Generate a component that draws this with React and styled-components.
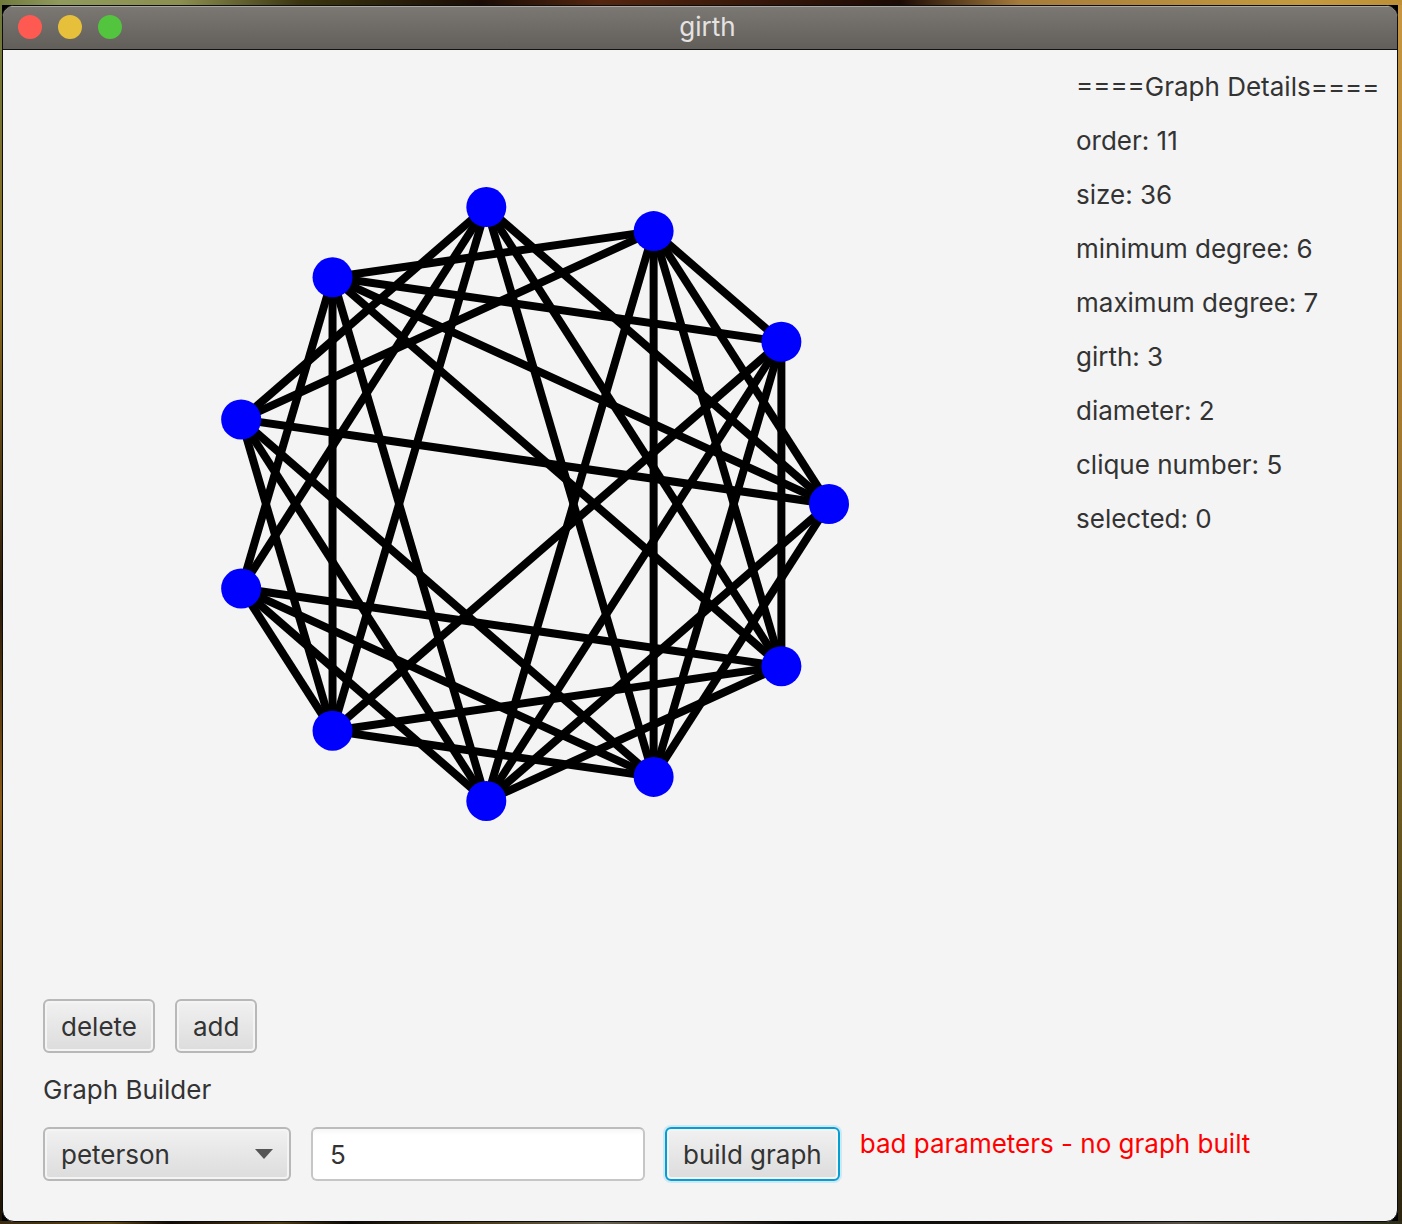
import styled, { createGlobalStyle } from "styled-components";

const GlobalStyle = createGlobalStyle`
  html, body {
    margin: 0;
    padding: 0;
    width: 1402px;
    height: 1224px;
    overflow: hidden;
  }
  * {
    box-sizing: border-box;
  }
`;

const Desktop = styled.div`
  width: 1402px;
  height: 1224px;
  padding: 5px 4px 2px 2px;
  font-family: Inter, "Liberation Sans", sans-serif;
  font-size: 26px;
  color: #333;
  background:
    linear-gradient(90deg, #6f7a3c 0, #8f9a5c 60px, #8c8f50 180px, #3a3510 300px, #1a0c04 480px, #54260f 600px, #1c0a04 900px, #a67c3c 1020px, #c49a40 1300px, #b7872e 1500px, #1a0c06 1600px, #c8963f 1700px, #c79a4e 2100px, #180c10 2240px, #d0a050 2500px, #c89848 2700px) top left / 1402px 5px no-repeat,
    linear-gradient(90deg, #3a2a10 0, #5a4518 110px, #120a04 170px, #4c3a16 280px, #0c0804 350px, #4a3c1c 480px, #6a6252 600px, #3a3024 720px, #050505 800px, #1a140c 1000px, #5a5248 1180px, #2c2c18 1402px) bottom left / 1402px 3px no-repeat,
    linear-gradient(180deg, #6f7a3c 0, #8a6a20 300px, #2a1a08 600px, #8a5a18 800px, #1c1206 1224px) left top / 2px 1224px no-repeat,
    linear-gradient(180deg, #c8963f 0, #a87c30 400px, #6c5a20 800px, #2c2410 1224px) right top / 4px 1224px no-repeat,
    #000;
`;

const Win = styled.div`
  height: 1217px;
  width: 1396px;
  border: 1px solid #0c0c0c;
  border-radius: 12px;
  overflow: hidden;
  display: flex;
  flex-direction: column;
  background: #f4f4f4;
`;

const TitleBar = styled.div`
  height: 44px;
  flex: none;
  display: grid;
  grid-template-columns: 1fr auto 1fr;
  align-items: center;
  padding: 0 0 2px 15px;
  border-top: 1px solid #a8a6a4;
  border-bottom: 1px solid #111;
  background: linear-gradient(#7b7773, #625f5b);
`;

const Lights = styled.div`
  display: flex;
  gap: 16px;
`;

const Light = styled.span`
  width: 24px;
  height: 24px;
  border-radius: 50%;
  background: ${(p) => p.color};
`;

const WinTitle = styled.div`
  color: #e4e3e2;
  line-height: 30px;
`;

const Main = styled.div`
  flex: 1;
  min-height: 0;
  display: grid;
  grid-template-columns: 1073px 1fr;
`;

const GraphPane = styled.div`
  overflow: hidden;
`;

const Details = styled.div`
  padding-top: 10px;
  display: flex;
  flex-direction: column;
  white-space: nowrap;
`;

const DetailLine = styled.div`
  height: 54px;
  line-height: 54px;
`;

const Controls = styled.div`
  flex: none;
  display: flex;
  flex-direction: column;
  gap: 10px;
  padding: 0 0 40px 40px;
`;

const Row = styled.div`
  display: flex;
  gap: 20px;
  align-items: flex-start;
`;

const FieldLabel = styled.div`
  height: 54px;
  line-height: 54px;
`;

const Button = styled.button`
  height: 54px;
  padding: 0 16px;
  font: inherit;
  color: #333;
  border-radius: 6px;
  border: 2px solid ${(p) => (p.$focused ? "#039ed3" : "#b8b8b8")};
  background: linear-gradient(#f1f1f1, #dcdcdc);
  box-shadow: inset 0 0 0 2px #f4f4f4 ${(p) => (p.$focused ? ", 0 0 0 2px #cfe9f4" : "")};
`;

const Combo = styled.div`
  width: 248px;
  height: 54px;
  padding: 0 16px;
  display: flex;
  align-items: center;
  justify-content: space-between;
  border-radius: 6px;
  border: 2px solid #b8b8b8;
  background: linear-gradient(#f1f1f1, #dcdcdc);
  box-shadow: inset 0 0 0 2px #f4f4f4;
`;

const Caret = styled.span`
  width: 18px;
  height: 10px;
  background: #555;
  clip-path: polygon(0 0, 100% 0, 50% 100%);
`;

const Field = styled.input`
  width: 334px;
  height: 54px;
  padding: 0 17px;
  font: inherit;
  color: #333;
  border-radius: 6px;
  border: 2px solid #c6c6c6;
  border-top-color: #bcbcbc;
  background: linear-gradient(#f6f6f6 0, #fff 6px);
  outline: none;
`;

const ErrorText = styled.div`
  color: #ff0000;
  height: 54px;
  line-height: 54px;
  margin-top: -10px;
`;

const cx = 529;
const cy = 504;
const radius = 300;

const nodes = Array.from({ length: 11 }, (_, k) => {
  const a = (k * 2 * Math.PI) / 11;
  return { x: cx + radius * Math.cos(a), y: cy + radius * Math.sin(a) };
});

const edges = [
  [0, 2], [0, 3], [0, 6], [0, 7], [0, 8], [0, 9],
  [1, 3], [1, 4], [1, 5], [1, 7], [1, 8], [1, 9], [1, 10],
  [2, 4], [2, 5], [2, 6], [2, 8], [2, 9], [2, 10],
  [3, 5], [3, 6], [3, 7], [3, 9], [3, 10],
  [4, 5], [4, 6], [4, 7], [4, 8], [4, 10],
  [5, 7], [5, 8],
  [6, 8], [6, 9],
  [7, 9], [7, 10],
  [9, 10],
];

const details = [
  "====Graph Details====",
  "order: 11",
  "size: 36",
  "minimum degree: 6",
  "maximum degree: 7",
  "girth: 3",
  "diameter: 2",
  "clique number: 5",
  "selected: 0",
];

const App = () => {
  return (
    <Desktop>
      <GlobalStyle />
      <Win>
        <TitleBar>
          <Lights>
            <Light color="#ff5a52" />
            <Light color="#e6c03a" />
            <Light color="#53c43e" />
          </Lights>
          <WinTitle>girth</WinTitle>
          <div />
        </TitleBar>
        <Main>
          <GraphPane>
            <svg width="1073" height="900" viewBox="3 50 1073 900">
              {edges.map(([a, b]) => (
                <line key={a + "-" + b} x1={nodes[a].x} y1={nodes[a].y} x2={nodes[b].x} y2={nodes[b].y} stroke="#000" strokeWidth="8" />
              ))}
              {nodes.map((n, i) => (
                <circle key={i} cx={n.x} cy={n.y} r="20" fill="#0000ff" />
              ))}
            </svg>
          </GraphPane>
          <Details>
            {details.map((d) => (
              <DetailLine key={d}>{d}</DetailLine>
            ))}
          </Details>
        </Main>
        <Controls>
          <Row>
            <Button>delete</Button>
            <Button>add</Button>
          </Row>
          <FieldLabel>Graph Builder</FieldLabel>
          <Row>
            <Combo>
              peterson
              <Caret />
            </Combo>
            <Field defaultValue="5" />
            <Button $focused>build graph</Button>
            <ErrorText>bad parameters - no graph built</ErrorText>
          </Row>
        </Controls>
      </Win>
    </Desktop>
  );
};

export default App;
